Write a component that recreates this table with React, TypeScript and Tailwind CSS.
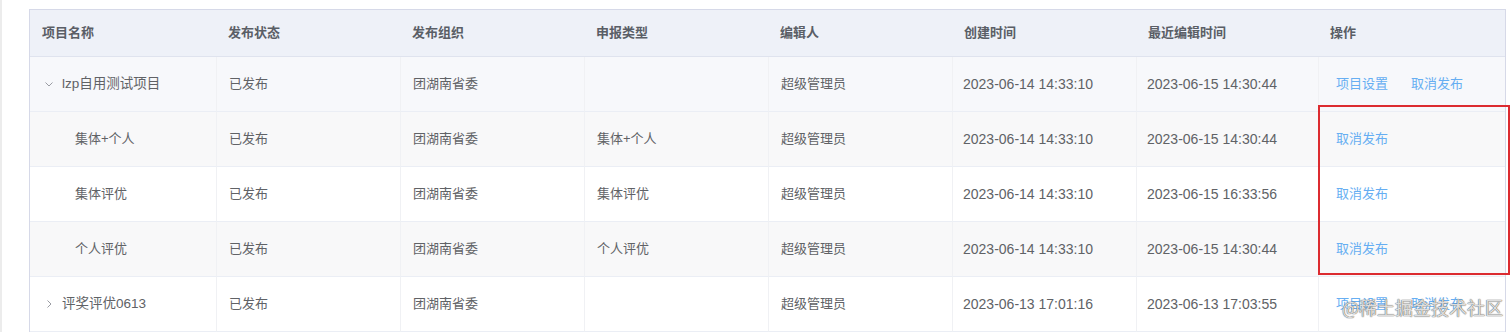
import React from "react";

type Row = {
  name: string;
  level: 0 | 1;
  expand?: "open" | "closed";
  status: string;
  org: string;
  type: string;
  editor: string;
  created: string;
  edited: string;
  ops: string[];
  bg: string;
};

const rows: Row[] = [
  { name: "lzp自用测试项目", level: 0, expand: "open", status: "已发布", org: "团湖南省委", type: "", editor: "超级管理员", created: "2023-06-14 14:33:10", edited: "2023-06-15 14:30:44", ops: ["项目设置", "取消发布"], bg: "bg-[#f7f8fb]" },
  { name: "集体+个人", level: 1, status: "已发布", org: "团湖南省委", type: "集体+个人", editor: "超级管理员", created: "2023-06-14 14:33:10", edited: "2023-06-15 14:30:44", ops: ["取消发布"], bg: "bg-[#f8f8f9]" },
  { name: "集体评优", level: 1, status: "已发布", org: "团湖南省委", type: "集体评优", editor: "超级管理员", created: "2023-06-14 14:33:10", edited: "2023-06-15 16:33:56", ops: ["取消发布"], bg: "bg-white" },
  { name: "个人评优", level: 1, status: "已发布", org: "团湖南省委", type: "个人评优", editor: "超级管理员", created: "2023-06-14 14:33:10", edited: "2023-06-15 14:30:44", ops: ["取消发布"], bg: "bg-[#f8f8f9]" },
  { name: "评奖评优0613", level: 0, expand: "closed", status: "已发布", org: "团湖南省委", type: "", editor: "超级管理员", created: "2023-06-13 17:01:16", edited: "2023-06-13 17:03:55", ops: ["项目设置", "取消发布"], bg: "bg-white" },
];

const headers = ["项目名称", "发布状态", "发布组织", "申报类型", "编辑人", "创建时间", "最近编辑时间", "操作"];

const grid = "grid grid-cols-[186px_184px_184px_184px_184px_184px_182px_1fr]";
const font = "font-['Liberation_Sans','Noto_Sans_CJK_SC',sans-serif]";

function Chevron({ open }: { open: boolean }) {
  return (
    <svg width="10" height="10" viewBox="0 0 10 10" className="shrink-0">
      {open ? (
        <path d="M1.5 3.5 L5 7 L8.5 3.5" fill="none" stroke="#9a9ca3" strokeWidth="1" />
      ) : (
        <path d="M3.5 1.5 L7 5 L3.5 8.5" fill="none" stroke="#9a9ca3" strokeWidth="1" />
      )}
    </svg>
  );
}

function Cell({ children, first, cls = "" }: { children?: React.ReactNode; first?: boolean; cls?: string }) {
  return (
    <div className={`flex items-center h-[55px] pl-3 border-b border-[#ebeef5] ${first ? "" : "border-l border-l-[#f0f1f4]"} ${cls}`}>
      {children}
    </div>
  );
}

export default function App() {
  return (
    <div className={`relative w-[1512px] h-[332px] overflow-hidden bg-white border-l-2 border-[#ececec] ${font}`}>
      <div className="ml-[27px] mt-[9px] w-[1477px] border-t border-l border-r border-[#d6d9e8]">
        <div className={`${grid} h-[47px] bg-[#eef1f8] border-b border-[#dfe3ee]`}>
          {headers.map((h) => (
            <div key={h} className="flex items-center pl-3 text-[13px] font-bold text-[#5a5e66]">
              {h}
            </div>
          ))}
        </div>
        {rows.map((r, i) => (
          <div key={i} className={`${grid} ${r.bg} text-[13px] text-[#606266]`}>
            <Cell first>
              {r.level === 0 ? (
                <div className="flex items-center">
                  <span className="w-[20px] flex justify-start pl-[2px]">
                    <Chevron open={r.expand === "open"} />
                  </span>
                  <span className="text-[13.5px]">{r.name}</span>
                </div>
              ) : (
                <span className="pl-[33px]">{r.name}</span>
              )}
            </Cell>
            <Cell>{r.status}</Cell>
            <Cell>{r.org}</Cell>
            <Cell>{r.type}</Cell>
            <Cell>{r.editor}</Cell>
            <Cell cls="text-[14px] pl-[10px]">{r.created}</Cell>
            <Cell cls="text-[14px] pl-[10px]">{r.edited}</Cell>
            <Cell cls="pl-[17px] gap-[23px]">
              {r.ops.map((o) => (
                <span key={o} className="text-[#66aef2] cursor-pointer">
                  {o}
                </span>
              ))}
            </Cell>
          </div>
        ))}
      </div>
      <div className="absolute left-[1316px] top-[105px] w-[192px] h-[170px] border-2 border-[#dc2b30] pointer-events-none" />
      <div className="absolute left-[1340px] top-[294px] text-[18px] text-white/80 [text-shadow:0_0_1px_#555,0_0_1px_#555] font-['Noto_Sans_CJK_SC',sans-serif] pointer-events-none">
        @稀土掘金技术社区
      </div>
    </div>
  );
}
